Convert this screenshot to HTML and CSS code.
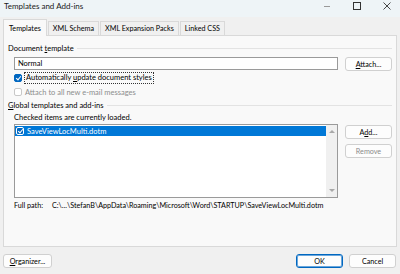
FILE: index.html
```html
<!DOCTYPE html>
<html lang="en">
<head>
  <meta charset="UTF-8">
  <title>Templates and Add-ins</title>
  <link rel="stylesheet" href="styles.css">
</head>
<body>
  <div class="janela">
    <div class="titulo">
      <span class="titulo-texto">Templates and Add-ins</span>
      <div class="controles">
        <span class="ctrl-min"></span>
        <span class="ctrl-max"></span>
        <svg class="ctrl-close" width="8" height="8" viewBox="0 0 8 8"><path d="M0.5 0.5L7.5 7.5M7.5 0.5L0.5 7.5" stroke="#333" stroke-width="0.9"/></svg>
      </div>
    </div>

    <div class="abas">
      <div class="aba ativa">Templates</div>
      <div class="aba">XML Schema</div>
      <div class="aba">XML Expansion Packs</div>
      <div class="aba">Linked CSS</div>
    </div>

    <div class="painel">
      <div class="grupo-titulo"><span>Document <u>t</u>emplate</span></div>
      <div class="linha">
        <div class="campo">Normal</div>
        <button class="botao"><u>A</u>ttach...</button>
      </div>
      <label class="check foco"><span class="caixa marcada"></span><span class="rotulo">Automatically <u>u</u>pdate document styles</span></label>
      <label class="check desativado"><span class="caixa"></span><span class="rotulo">Attach to all new e-mail messages</span></label>

      <div class="grupo-titulo"><span><u>G</u>lobal templates and add-ins</span></div>
      <div class="legenda">Checked items are currently loaded.</div>
      <div class="linha">
        <div class="lista">
          <div class="itens">
            <div class="item selecionado"><span class="caixa marcada"></span><span>SaveViewLocMulti.dotm</span></div>
          </div>
          <div class="rolagem">
            <span class="seta cima"></span>
            <span class="seta baixo"></span>
          </div>
        </div>
        <div class="botoes-lado">
          <button class="botao">A<u>d</u>d...</button>
          <button class="botao" disabled>Remove</button>
        </div>
      </div>
      <div class="caminho"><span class="caminho-rotulo">Full path:</span>C:\...\StefanB\AppData\Roaming\Microsoft\Word\STARTUP\SaveViewLocMulti.dotm</div>
    </div>

    <div class="rodape">
      <button class="botao"><u>O</u>rganizer...</button>
      <div class="rodape-dir">
        <button class="botao padrao">OK</button>
        <button class="botao">Cancel</button>
      </div>
    </div>
  </div>
</body>
</html>
```

FILE: styles.css
```css
body {
  margin: 0;
  font-family: "Lato", "Noto Sans", sans-serif;
  font-size: 7.5px;
  color: #000;
  background: #f0f0f0;
}
.janela {
  width: 400px;
  height: 274px;
  display: flex;
  flex-direction: column;
  background: #f0f0f0;
  overflow: hidden;
}
.titulo {
  height: 17px;
  flex: none;
  display: flex;
  align-items: flex-start;
  justify-content: space-between;
  padding-left: 4px;
  background: #eef4f7;
  font-size: 8px;
  color: #1a1a1a;
}
.titulo-texto {
  margin-top: 1px;
}
.controles {
  display: flex;
  align-items: center;
  height: 12px;
}
.ctrl-min {
  width: 6px;
  height: 1px;
  background: #999;
  margin-right: 23px;
}
.ctrl-max {
  width: 6px;
  height: 6px;
  border: 1px solid #333;
  margin-right: 22px;
}
.ctrl-close {
  margin-right: 9px;
}
.abas {
  display: flex;
  align-items: flex-end;
  padding-left: 3px;
  height: 18px;
  flex: none;
  font-size: 7.2px;
}
.aba {
  height: 13px;
  line-height: 13px;
  padding: 0 4px;
  border: 1px solid #d9d9d9;
  border-bottom: none;
  background: #f0f0f0;
  margin-right: 1px;
}
.aba.ativa {
  height: 16px;
  line-height: 17px;
  background: #f9f9f9;
  position: relative;
  z-index: 1;
  margin-bottom: -1px;
  padding: 0 5px;
}
.painel {
  margin: 0 3px;
  height: 212px;
  flex: none;
  box-sizing: border-box;
  border: 1px solid #d9d9d9;
  background: #f9f9f9;
  padding: 6px 4px 0 4px;
}
.grupo-titulo {
  display: flex;
  align-items: center;
  gap: 3px;
  height: 12px;
}
.grupo-titulo::after {
  content: "";
  flex: 1;
  border-top: 1px solid #e3e3e3;
}
.linha {
  display: flex;
  gap: 7px;
  padding-left: 6px;
}
.campo {
  width: 324px;
  height: 13px;
  box-sizing: border-box;
  border: 1px solid #9a9a9a;
  background: #fff;
  padding-left: 3px;
  line-height: 11px;
  margin-top: 3px;
}
.botao {
  font-family: inherit;
  font-size: 7.2px;
  width: 47px;
  height: 14px;
  padding: 0;
  border: 1px solid #d0d0d0;
  border-radius: 3px;
  background: #fdfdfd;
  color: #000;
}
.linha > .botao {
  margin-top: 3px;
}
.botao:disabled {
  color: #8a8a8a;
}
.botao.padrao {
  border: 1px solid #0067c0;
  box-shadow: inset 0 0 0 1px #6aa6db;
}
.check {
  display: flex;
  align-items: center;
  gap: 3px;
  padding-left: 6px;
  height: 14px;
}
.caixa {
  width: 8px;
  height: 8px;
  box-sizing: border-box;
  border: 1px solid #888;
  border-radius: 2px;
  background: #fff;
  flex: none;
  position: relative;
}
.caixa.marcada {
  background: #0067c0;
  border-color: #0067c0;
}
.caixa.marcada::after {
  content: "";
  position: absolute;
  left: 1.5px;
  top: 0;
  width: 2px;
  height: 4px;
  border-right: 1px solid #fff;
  border-bottom: 1px solid #fff;
  transform: rotate(40deg);
}
.foco .rotulo {
  outline: 1px dotted #333;
  padding: 0 1px;
  line-height: 10px;
}
.desativado {
  color: #8d8d8d;
}
.desativado .caixa {
  border-color: #c8c8c8;
}
.legenda {
  padding-left: 6px;
  margin-top: 1px;
  height: 12px;
  line-height: 12px;
}
.lista {
  width: 324px;
  height: 74px;
  box-sizing: border-box;
  border: 1px solid #9a9a9a;
  background: #fff;
  display: flex;
}
.itens {
  flex: 1;
  padding-top: 1px;
}
.item {
  display: flex;
  align-items: center;
  gap: 3px;
  height: 10px;
  padding-left: 1px;
}
.item.selecionado {
  background: #0078d7;
  color: #fff;
}
.item .caixa.marcada {
  border-color: #fff;
}
.rolagem {
  width: 11px;
  background: #f0f0f0;
  display: flex;
  flex-direction: column;
  justify-content: space-between;
  align-items: center;
  padding: 5px 0;
}
.seta {
  width: 0;
  height: 0;
  border-left: 3px solid transparent;
  border-right: 3px solid transparent;
}
.seta.cima {
  border-bottom: 3px solid #a8a8a8;
}
.seta.baixo {
  border-top: 3px solid #a8a8a8;
}
.botoes-lado {
  display: flex;
  flex-direction: column;
  gap: 5px;
  padding-top: 1px;
}
.caminho {
  padding-left: 6px;
  margin-top: 3px;
  height: 10px;
  line-height: 10px;
  font-size: 7.2px;
}
.caminho-rotulo {
  display: inline-block;
  width: 38px;
}
.rodape {
  display: flex;
  justify-content: space-between;
  padding: 7px 4px 0 3px;
}
.rodape-dir {
  display: flex;
  gap: 6px;
}
.rodape .botao {
  width: 49px;
  height: 14px;
}
.rodape-dir .botao {
  width: 47px;
}
```
